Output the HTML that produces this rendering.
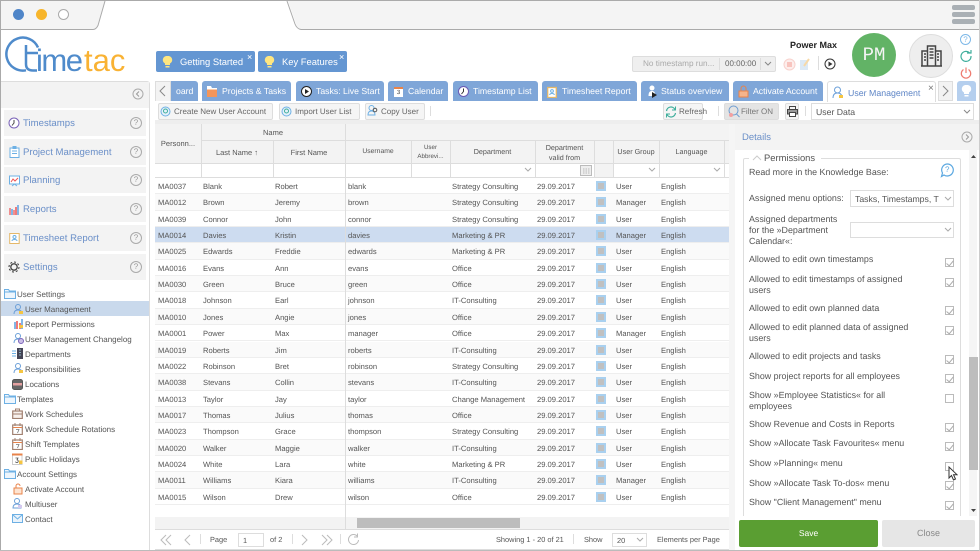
<!DOCTYPE html>
<html><head><meta charset="utf-8"><style>
*{box-sizing:border-box}
html,body{margin:0;padding:0;background:#fff}
body{width:980px;height:551px;overflow:hidden;background:#fff;position:relative;font-family:"Liberation Sans",sans-serif;color:#555;font-size:9px;text-rendering:geometricPrecision;filter:blur(.3px)}
div,span,svg{position:absolute;white-space:nowrap}
.tab{top:81px;height:20px;background:#7fa6d8;border-radius:3px 3px 0 0;color:#fff;font-size:8.7px;line-height:21px}
.tab b{font-weight:normal;position:absolute;top:0}
.btn{top:103px;height:17px;background:#f5f5f5;border:1px solid #ddd;border-radius:2px;font-size:8px;line-height:16px;color:#666}
.btn b{font-weight:normal;position:absolute;top:0}
.nav{left:4px;width:142px;height:26px;background:#f3f3f3;color:#6a8fc8;font-size:9.6px;line-height:26px}
.nav b{font-weight:normal;position:absolute;left:19px;top:1px}
.q{left:126px;top:7px;width:12px;height:12px;border:1px solid #aaa;border-radius:50%;color:#999;font-size:8px;line-height:10px;text-align:center}
.t{font-size:8px;color:#555;line-height:15px;height:15px}
.row{left:155px;width:574px;height:16.35px;border-bottom:1px solid #eee;font-size:7.6px;line-height:17px;color:#555}
.row.g{background:#fafafa}
.row.s{background:#cddcf0}
.row span{top:0}
.c1{left:3px}.c2{left:48px}.c3{left:120px}.c4{left:193px}.c5{left:297px}.c6{left:382px}.c7{left:441px;top:3px!important;width:10px;height:10px;background:#c0c0c0;border:2px solid #a9d0ef}.c8{left:461px}.c9{left:506px}
.h{font-size:7.2px;color:#555;text-align:center;line-height:9px;white-space:normal}
.v{width:1px;background:#ddd}
.l{left:749px;font-size:8.9px;color:#555;line-height:11px}
.cb{left:945px;width:9px;height:9px;border:1px solid #bbb;background:#fff}
.cb.k:after{content:"";position:absolute;left:2px;top:0;width:3px;height:6px;border:solid #aaa;border-width:0 1px 1px 0;transform:rotate(40deg)}
.p{top:534px;font-size:7.4px;color:#555;line-height:11px}
</style></head><body>
<div style="left:0;top:0;width:980px;height:30px;background:#f4f4f4;border-top:1px solid #aaa;border-bottom:1px solid #aaa"></div>
<svg style="left:90px;top:0" width="225" height="31"><path d="M0 29.5h3q3 0 5-4L15 1H198L206 24q2 5 6 5.5H225V31H0z" fill="#fff"/><path d="M0 29.5h3q3 0 5-4L15 1M197 1L205 24q2 5 6 5.5h14" fill="none" stroke="#aaa"/></svg>
<div style="left:13px;top:9px;width:11px;height:11px;border-radius:50%;background:#4f85c8"></div>
<div style="left:36px;top:9px;width:11px;height:11px;border-radius:50%;background:#f7b52b"></div>
<div style="left:58px;top:9px;width:11px;height:11px;border-radius:50%;background:#fff;border:1px solid #aaa"></div>
<div style="left:952px;top:5px;width:23px;height:5px;background:#aab0b5;border-radius:2px"></div>
<div style="left:952px;top:12px;width:23px;height:5px;background:#aab0b5;border-radius:2px"></div>
<div style="left:952px;top:19px;width:23px;height:5px;background:#aab0b5;border-radius:2px"></div>
<div style="left:0;top:0;width:1px;height:551px;background:#aaa"></div>
<!-- logo -->
<svg style="left:5px;top:34px" width="50" height="40"><path d="M33 13.500A16.500 16.500 0 1 0 21 36.300" fill="none" stroke="#4f8bcb" stroke-width="2.500"/><path d="M21 11V30q0 6.500 7 6.500h4M21 19H33" fill="none" stroke="#4f8bcb" stroke-width="2.500"/></svg>
<div style="left:36px;top:45px;font-size:31px;line-height:31px;color:#4f8bcb;letter-spacing:-1.5px">ime</div>
<div style="left:84px;top:45px;font-size:31px;line-height:31px;color:#f9b233">tac</div>
<!-- top tip buttons -->
<div style="left:156px;top:51px;width:99px;height:21px;background:#6496d2;border-radius:2px;color:#fff;font-size:9.4px;line-height:22px"><span style="left:24px">Getting Started</span><span style="left:91px;top:-5px;font-size:9px">×</span></div>
<svg style="left:162px;top:56px" width="11" height="12"><path d="M5.500 0a4 4 0 0 1 2.500 7.500V9H3V7.500A4 4 0 0 1 5.500 0z" fill="#ffe680"/><path d="M3.500 10h4v1.500h-4z" fill="#ffe680"/></svg>
<div style="left:258px;top:51px;width:89px;height:21px;background:#6496d2;border-radius:2px;color:#fff;font-size:9.4px;line-height:22px"><span style="left:24px">Key Features</span><span style="left:81px;top:-5px;font-size:9px">×</span></div>
<svg style="left:264px;top:56px" width="11" height="12"><path d="M5.500 0a4 4 0 0 1 2.500 7.500V9H3V7.500A4 4 0 0 1 5.500 0z" fill="#ffe680"/><path d="M3.500 10h4v1.500h-4z" fill="#ffe680"/></svg>
<!-- timer -->
<div style="left:632px;top:56px;width:144px;height:16px;background:#efefef;border:1px solid #ddd;border-radius:2px"></div>
<div style="left:643px;top:58px;font-size:8.2px;line-height:12px;color:#aaa">No timestamp run...</div>
<div style="left:725px;top:58px;font-size:8px;line-height:12px;color:#666">00:00:00</div>
<div class="v" style="left:719px;top:58px;height:12px"></div><div class="v" style="left:760px;top:58px;height:12px"></div>
<svg style="left:764px;top:61px" width="8" height="6"><path d="M1 1l3 3 3-3" fill="none" stroke="#888"/></svg>
<svg style="left:783px;top:58px" width="13" height="13"><circle cx="6.500" cy="6.500" r="5.500" fill="#fdeeec" stroke="#f8d2cd"/><rect x="4" y="4" width="5" height="5" fill="#f8c4be"/></svg>
<svg style="left:799px;top:58px" width="12" height="13"><rect x="1" y="2" width="8" height="10" fill="#dce9f5"/><path d="M5 8L10 1" stroke="#f7d9a8" stroke-width="2"/></svg>
<div class="v" style="left:818px;top:56px;height:14px"></div>
<svg style="left:824px;top:58px" width="12" height="12"><circle cx="6" cy="6" r="5" fill="#fff" stroke="#333"/><path d="M4.500 3.500L8.500 6 4.500 8.500z" fill="#333"/></svg>
<div style="left:790px;top:40px;font-size:9px;font-weight:bold;color:#222;line-height:11px">Power Max</div>
<div style="left:852px;top:33px;width:44px;height:44px;border-radius:50%;background:#62b366;color:#f4f4f4;font-family:'Liberation Mono',monospace;font-size:19px;line-height:44px;text-align:center">PM</div>
<div style="left:909px;top:34px;width:44px;height:44px;border-radius:50%;background:#eee;border:1px solid #ddd"></div>
<svg style="left:921px;top:44px" width="21" height="23"><path d="M6.500 22V2h8v20M1 22V7h5.500M14.500 7H20v15M0 22h21" fill="none" stroke="#444" stroke-width="1.500"/><path d="M8.500 5h4M8.500 8h4M8.500 11h4M8.500 14h4M3 10h2M3 13h2M3 16h2M16 10h2M16 13h2M16 16h2" stroke="#444" stroke-width="1.500"/></svg>
<div style="left:960px;top:34px;width:11px;height:11px;border:1px solid #7db8e8;border-radius:50%;color:#7db8e8;font-size:8px;line-height:10px;text-align:center">?</div>
<svg style="left:960px;top:50px" width="12" height="12"><path d="M9.500 2.800A5 5 0 1 0 11 6" fill="none" stroke="#3fae9c" stroke-width="1.200"/><path d="M7 3h4V0" fill="none" stroke="#3fae9c" stroke-width="1.200"/></svg>
<svg style="left:960px;top:67px" width="12" height="12"><path d="M3.500 2.500a4.700 4.700 0 1 0 5 0M6 .5V6" fill="none" stroke="#ee7b70" stroke-width="1.200"/></svg>
<!-- tabs -->
<div style="left:155px;top:81px;width:16px;height:20px;background:#f3f3f3;border:1px solid #ddd;border-bottom:0"></div>
<svg style="left:159px;top:85px" width="8" height="12"><path d="M6 1L1 6l5 5" fill="none" stroke="#888"/></svg>
<div class="tab" style="left:171px;width:27px;border-radius:0 3px 0 0"><b style="left:5px">oard</b></div>
<div class="tab" style="left:202px;width:89px"><b style="left:20px">Projects &amp; Tasks</b></div>
<svg style="left:207px;top:86px" width="10" height="11"><path d="M0 0h4l1 2h5v9H0z" fill="#fff"/><rect x="0" y="3.500" width="10" height="7.500" fill="#f3955a"/></svg>
<div class="tab" style="left:296px;width:88px"><b style="left:20px">Tasks: Live Start</b></div>
<svg style="left:301px;top:86px" width="11" height="11"><circle cx="5.500" cy="5.500" r="5" fill="#fff" stroke="#222"/><path d="M4 3l4 2.500L4 8z" fill="#222"/></svg>
<div class="tab" style="left:388px;width:60px"><b style="left:20px">Calendar</b></div>
<div style="left:394px;top:87px;width:9px;height:10px;background:#fff;border-top:2px solid #e8834a;color:#444;font-size:6px;line-height:8px;text-align:center">3</div>
<div class="tab" style="left:453px;width:85px"><b style="left:20px">Timestamp List</b></div>
<svg style="left:458px;top:86px" width="11" height="11"><circle cx="5.500" cy="5.500" r="5" fill="#fff" stroke="#6b5bb5"/><path d="M5.500 2.500v3L3.500 8" fill="none" stroke="#333"/></svg>
<div class="tab" style="left:542px;width:95px"><b style="left:20px">Timesheet Report</b></div>
<svg style="left:547px;top:86px" width="10" height="12"><rect x=".7" y="1.500" width="8.600" height="10" fill="#fff" stroke="#e4b86a" stroke-width="1.300"/><circle cx="5" cy="5" r="1.400" fill="none" stroke="#6db0e4"/><path d="M2.700 9c0-2 4.600-2 4.600 0" fill="none" stroke="#6db0e4"/></svg>
<div class="tab" style="left:641px;width:88px"><b style="left:20px">Status overview</b></div>
<svg style="left:647px;top:85px" width="11" height="13"><circle cx="5" cy="3" r="2.500" fill="#fff"/><path d="M1.500 11c0-4 1.500-5 3.500-5s3 1 3 3v2z" fill="#fff"/><path d="M5 7v6l5-3z" fill="#222"/></svg>
<div class="tab" style="left:733px;width:90px"><b style="left:20px">Activate Account</b></div>
<svg style="left:738px;top:85px" width="11" height="13"><path d="M3 6V3.500a2.500 2.500 0 0 1 5 0V6" fill="none" stroke="#e8834a"/><rect x="1" y="6" width="9" height="6" fill="#f4b48c" stroke="#e8834a"/></svg>
<div style="left:827px;top:81px;width:109px;height:21px;background:#fff;border:1px solid #ddd;border-bottom:0;border-radius:3px 3px 0 0;color:#5f86c6;font-size:8.8px;line-height:23px"><span style="left:20px">User Management</span><span style="left:100px;top:-5px;color:#777;font-size:10px">×</span></div>
<svg style="left:832px;top:86px" width="12" height="13"><circle cx="5.500" cy="4" r="3" fill="none" stroke="#6b9fd8"/><path d="M1 12c0-4 2-5 4.500-5S10 8 10 12" fill="none" stroke="#6b9fd8"/><rect x="7" y="9" width="4" height="3" fill="#f5c542"/></svg>
<div style="left:938px;top:81px;width:15px;height:20px;background:#f3f3f3;border:1px solid #ddd"></div>
<svg style="left:941px;top:85px" width="8" height="12"><path d="M2 1l5 5-5 5" fill="none" stroke="#888"/></svg>
<div style="left:957px;top:81px;width:19px;height:20px;background:#b5cfee;border-radius:3px 3px 0 0"></div>
<svg style="left:961px;top:85px" width="11" height="13"><path d="M5.500 0a4 4 0 0 1 2.500 7.500V9H3V7.500A4 4 0 0 1 5.500 0z" fill="#fff"/><path d="M3.500 10h4v1.500h-4z" fill="#fff"/></svg>
<!-- sidebar -->
<div style="left:1px;top:81px;width:149px;height:470px;border:1px solid #ddd;border-left:0;border-radius:0 3px 0 0"></div>
<div style="left:1px;top:82px;width:148px;height:26px;background:#f3f3f3"></div>
<svg style="left:132px;top:88px" width="12" height="12"><circle cx="6" cy="6" r="5" fill="none" stroke="#aaa"/><path d="M7 3.500L4.500 6 7 8.500" fill="none" stroke="#999"/></svg>
<div class="nav" style="top:110px"><b>Timestamps</b><span class="q">?</span></div>
<div class="nav" style="top:139px"><b>Project Management</b><span class="q">?</span></div>
<div class="nav" style="top:167px"><b>Planning</b><span class="q">?</span></div>
<div class="nav" style="top:196px"><b>Reports</b><span class="q">?</span></div>
<div class="nav" style="top:225px"><b>Timesheet Report</b><span class="q">?</span></div>
<div class="nav" style="top:254px"><b>Settings</b><span class="q">?</span></div>
<svg style="left:8px;top:117px" width="12" height="12"><circle cx="6" cy="6" r="5" fill="#fff" stroke="#7a63b8"/><path d="M6 3v3L4 8.500" fill="none" stroke="#444"/></svg>
<svg style="left:9px;top:146px" width="11" height="12"><rect x="1" y="2" width="9" height="9.500" fill="#fff" stroke="#6db0e4"/><path d="M3 5h5M3 7.500h5" stroke="#6db0e4"/><rect x="3.500" y="0" width="4" height="3" fill="#6db0e4"/></svg>
<svg style="left:9px;top:175px" width="11" height="12"><rect x=".5" y="1" width="10" height="8" fill="#fff" stroke="#6db0e4"/><path d="M2 7l2-3 2 2 3-3" fill="none" stroke="#e55"/><path d="M3 11l2.500-2 2.500 2" fill="none" stroke="#6db0e4"/></svg>
<svg style="left:8px;top:204px" width="12" height="11"><path d="M1 4h2v7H1zM5 6h2v5H5z" fill="#f08f8f"/><path d="M3 5h2v6H3zM9 1h2v10H9z" fill="#82b6e6"/><path d="M7 3h2v8H7z" fill="#ee7b7b"/></svg>
<svg style="left:9px;top:232px" width="11" height="12"><rect x=".7" y="1.500" width="9.500" height="10" fill="#fff" stroke="#e4b86a"/><circle cx="5.500" cy="5" r="1.500" fill="none" stroke="#6db0e4"/><path d="M3 9c0-2 5-2 5 0" fill="none" stroke="#6db0e4"/></svg>
<svg style="left:8px;top:261px" width="12" height="12"><circle cx="6" cy="6" r="3.200" fill="none" stroke="#444" stroke-width="1.300"/><circle cx="6" cy="6" r="5" fill="none" stroke="#444" stroke-width="1.100" stroke-dasharray="2 1.900"/></svg>
<div style="left:1px;top:301px;width:148px;height:15px;background:#c9d9ec"></div>
<div class="t" style="left:17px;top:287px">User Settings</div>
<div class="t" style="left:25px;top:302px">User Management</div>
<div class="t" style="left:25px;top:317px">Report Permissions</div>
<div class="t" style="left:25px;top:332px">User Management Changelog</div>
<div class="t" style="left:25px;top:347px">Departments</div>
<div class="t" style="left:25px;top:362px">Responsibilities</div>
<div class="t" style="left:25px;top:377px">Locations</div>
<div class="t" style="left:17px;top:392px">Templates</div>
<div class="t" style="left:25px;top:407px">Work Schedules</div>
<div class="t" style="left:25px;top:422px">Work Schedule Rotations</div>
<div class="t" style="left:25px;top:437px">Shift Templates</div>
<div class="t" style="left:25px;top:452px">Public Holidays</div>
<div class="t" style="left:17px;top:467px">Account Settings</div>
<div class="t" style="left:25px;top:482px">Activate Account</div>
<div class="t" style="left:25px;top:497px">Multiuser</div>
<div class="t" style="left:25px;top:512px">Contact</div>
<svg style="left:4px;top:288px" width="12" height="11"><path d="M.5 3V1.500h4l1 1.500h6v7.500H.5z" fill="#eef6fd" stroke="#6db0e4"/><path d="M.5 4h11" stroke="#6db0e4"/></svg>
<svg style="left:4px;top:393px" width="12" height="11"><path d="M.5 3V1.500h4l1 1.500h6v7.500H.5z" fill="#eef6fd" stroke="#6db0e4"/><path d="M.5 4h11" stroke="#6db0e4"/></svg>
<svg style="left:4px;top:468px" width="12" height="11"><path d="M.5 3V1.500h4l1 1.500h6v7.500H.5z" fill="#eef6fd" stroke="#6db0e4"/><path d="M.5 4h11" stroke="#6db0e4"/></svg>
<svg style="left:13px;top:304px" width="11" height="11"><circle cx="5" cy="3" r="2.500" fill="none" stroke="#6b9fd8"/><path d="M1 10c0-3 2-4 4-4s4 1 4 4" fill="none" stroke="#6b9fd8"/><rect x="6" y="7" width="4" height="3" fill="#f5c542"/></svg>
<svg style="left:13px;top:318px" width="11" height="11"><path d="M1 4h2v7H1zM8 1h2v10H8z" fill="#82b6e6"/><path d="M3 3h2v8H3zM6 5h2v6H6z" fill="#ee7b7b"/><rect x="6" y="7" width="4" height="3" fill="#f5c542"/></svg>
<svg style="left:13px;top:333px" width="11" height="11"><circle cx="5" cy="3" r="2.500" fill="none" stroke="#6b9fd8"/><path d="M1 10c0-3 2-4 4-4s4 1 4 4" fill="none" stroke="#6b9fd8"/><circle cx="8" cy="8" r="2.500" fill="#cbbfe8" stroke="#7a63b8"/></svg>
<svg style="left:12px;top:348px" width="12" height="11"><path d="M0 3h4M0 5.500h4M0 8h4" stroke="#6db0e4"/><rect x="5" y="0" width="6" height="11" fill="#445"/><path d="M7 2h2M7 4.500h2M7 7h2" stroke="#8ab"/></svg>
<svg style="left:13px;top:363px" width="11" height="11"><circle cx="5" cy="3" r="2.500" fill="none" stroke="#6b9fd8"/><path d="M1 10c0-3 2-4 4-4s4 1 4 4" fill="none" stroke="#6b9fd8"/><rect x="6" y="7" width="4" height="3" fill="#f5c542"/></svg>
<svg style="left:12px;top:379px" width="11" height="11"><rect x=".5" y=".5" width="10" height="10" rx="2" fill="#666" stroke="#555"/><rect x="1" y="4" width="9" height="2.500" fill="#e4a0a0"/></svg>
<svg style="left:12px;top:408px" width="11" height="11"><rect x=".7" y="3" width="9.600" height="7.500" fill="#f7f0ec" stroke="#a08070" stroke-width="1.200"/><path d="M3.500 3V1h4v2M1 6h9" fill="none" stroke="#a08070"/></svg>
<svg style="left:12px;top:423px" width="11" height="12"><rect x=".7" y="2" width="9.600" height="9.500" fill="#fff" stroke="#a08070" stroke-width="1.200"/><path d="M1 4.500h9" stroke="#e8834a"/><path d="M3 0v3M8 0v3" stroke="#a08070"/><path d="M4 6.500h3L5.500 10" fill="none" stroke="#777" stroke-width=".8"/></svg>
<svg style="left:12px;top:438px" width="11" height="12"><rect x=".7" y="2" width="9.600" height="9.500" fill="#fff" stroke="#a08070" stroke-width="1.200"/><path d="M1 4.500h9" stroke="#e8834a"/><path d="M3 0v3M8 0v3" stroke="#a08070"/><path d="M4 6.500h3L5.500 10" fill="none" stroke="#777" stroke-width=".8"/></svg>
<svg style="left:12px;top:453px" width="11" height="12"><rect x=".5" y="1" width="9.500" height="10.500" fill="#fff" stroke="#ccc"/><path d="M0 1.500h10.500" stroke="#e8834a" stroke-width="2"/><path d="M3.500 5h2.500l-1 1.800a1.400 1.400 0 1 1-1.500 1.800" fill="none" stroke="#555" stroke-width=".8"/><rect x="7" y="7.500" width="3.500" height="3.500" fill="#f5c542"/></svg>
<svg style="left:13px;top:483px" width="10" height="12"><path d="M3 5V3a2 2 0 0 1 4 0" fill="none" stroke="#e8834a"/><rect x="1" y="5" width="8" height="6" fill="#fde4d2" stroke="#e8834a"/></svg>
<svg style="left:12px;top:498px" width="11" height="12"><circle cx="5" cy="3" r="2.500" fill="none" stroke="#6b9fd8"/><path d="M1 10c0-3 2-4 4-4s4 1 4 4z" fill="none" stroke="#6b9fd8"/><rect x="6" y="7" width="4" height="3" fill="#d5c8ee"/></svg>
<svg style="left:12px;top:514px" width="11" height="9"><rect x=".5" y=".5" width="10" height="8" fill="#eaf3fb" stroke="#6db0e4"/><path d="M1 1l4.500 4L10 1" fill="none" stroke="#6db0e4"/></svg>
<!-- toolbar -->
<div class="btn" style="left:158px;width:115px"><b style="left:15px">Create New User Account</b></div>
<div class="btn" style="left:279px;width:81px"><b style="left:15px">Import User List</b></div>
<div class="btn" style="left:365px;width:60px"><b style="left:15px">Copy User</b></div>
<svg style="left:160px;top:106px" width="11" height="11"><circle cx="5.500" cy="5.500" r="4.500" fill="#e6f1fb" stroke="#6db0e4"/><circle cx="5.500" cy="5" r="2" fill="none" stroke="#3fae9c"/></svg>
<svg style="left:281px;top:106px" width="11" height="11"><circle cx="5.500" cy="5.500" r="4.500" fill="#e6f1fb" stroke="#6db0e4"/><circle cx="5.500" cy="5" r="2" fill="none" stroke="#3fae9c"/></svg>
<svg style="left:367px;top:105px" width="11" height="12"><circle cx="4.500" cy="3" r="2.500" fill="none" stroke="#6db0e4"/><path d="M1 10c0-3 1.500-4 3.500-4s3.500 1 3.500 4z" fill="none" stroke="#6db0e4"/><circle cx="8" cy="5" r="1.800" fill="none" stroke="#555"/></svg>
<div class="v" style="left:430px;top:106px;height:10px"></div>
<div class="btn" style="left:663px;width:40px"><b style="left:15px">Refresh</b></div>
<svg style="left:665px;top:106px" width="12" height="12"><path d="M1.500 5A4.500 4.500 0 0 1 10 3.500M10.500 7A4.500 4.500 0 0 1 2 8.500" fill="none" stroke="#3fae9c" stroke-width="1.200"/><path d="M10.500 .5V4H7M1.500 11.500V8H5" fill="none" stroke="#3fae9c"/></svg>
<div class="v" style="left:718px;top:106px;height:10px"></div>
<div class="btn" style="left:724px;width:55px;background:#e4e4e4;color:#777"><b style="left:16px">Filter ON</b></div>
<svg style="left:727px;top:105px" width="13" height="13"><circle cx="6.500" cy="5.500" r="4.500" fill="none" stroke="#6d9cd0"/><path d="M9.500 9l3 3" stroke="#6d9cd0"/><circle cx="4" cy="10" r="2" fill="#f3a0a0"/></svg>
<div class="btn" style="left:785px;width:14px"></div>
<svg style="left:787px;top:106px" width="11" height="11"><rect x="2.500" y=".5" width="6" height="3" fill="none" stroke="#444"/><rect x=".5" y="3.500" width="10" height="4.500" fill="#999" stroke="#444"/><rect x="2.500" y="6.500" width="6" height="4" fill="#fff" stroke="#444"/></svg>
<div class="v" style="left:805px;top:106px;height:10px"></div>
<div style="left:811px;top:103px;width:163px;height:17px;border:1px solid #ddd;background:#fff;font-size:8.7px;line-height:16px;color:#555"><span style="left:4px">User Data</span></div>
<svg style="left:963px;top:109px" width="8" height="6"><path d="M1 1l3 3 3-3" fill="none" stroke="#888"/></svg>
<!-- grid -->
<div style="left:155px;top:120px;width:825px;height:4px;background:#eee"></div>
<div style="left:155px;top:124px;width:574px;height:39px;background:#f3f3f3"></div>
<div style="left:201px;top:140px;width:144px;height:1px;background:#ddd"></div>
<div style="left:345px;top:140px;width:384px;height:1px;background:#ddd"></div>
<div style="left:155px;top:163px;width:574px;height:1px;background:#ddd"></div>
<div style="left:155px;top:177px;width:574px;height:1px;background:#ddd"></div>
<div style="left:594px;top:164px;width:19px;height:13px;background:#f3f3f3"></div>
<div class="v" style="left:201px;top:124px;height:54px"></div>
<div class="v" style="left:273px;top:141px;height:37px"></div>
<div class="v" style="left:345px;top:124px;height:393px"></div>
<div class="v" style="left:411px;top:141px;height:37px"></div>
<div class="v" style="left:450px;top:141px;height:37px"></div>
<div class="v" style="left:535px;top:141px;height:37px"></div>
<div class="v" style="left:594px;top:141px;height:37px"></div>
<div class="v" style="left:613px;top:141px;height:37px"></div>
<div class="v" style="left:659px;top:141px;height:37px"></div>
<div class="v" style="left:724px;top:141px;height:37px"></div>
<div class="h" style="left:155px;top:139px;width:46px;font-size:7.5px">Personn...</div>
<div class="h" style="left:201px;top:128px;width:144px;font-size:7.5px">Name</div>
<div class="h" style="left:201px;top:148px;width:72px;font-size:7.5px">Last Name ↑</div>
<div class="h" style="left:273px;top:148px;width:72px;font-size:7.5px">First Name</div>
<div class="h" style="left:345px;top:147px;width:66px;font-size:6.8px">Username</div>
<div class="h" style="left:411px;top:143px;width:39px;font-size:6.2px;line-height:9px">User<br>Abbrevi...</div>
<div class="h" style="left:450px;top:147px;width:85px">Department</div>
<div class="h" style="left:535px;top:143px;width:59px;line-height:10px">Department<br>valid from</div>
<div class="h" style="left:613px;top:147px;width:46px">User Group</div>
<div class="h" style="left:659px;top:147px;width:65px">Language</div>
<svg style="left:524px;top:167px" width="8" height="6"><path d="M1 1l3 3 3-3" fill="none" stroke="#aaa"/></svg>
<svg style="left:648px;top:167px" width="8" height="6"><path d="M1 1l3 3 3-3" fill="none" stroke="#aaa"/></svg>
<svg style="left:713px;top:167px" width="8" height="6"><path d="M1 1l3 3 3-3" fill="none" stroke="#aaa"/></svg>
<svg style="left:580px;top:164px" width="13" height="12"><rect x=".5" y="1.500" width="11" height="10" fill="#eee" stroke="#bbb"/><path d="M3 5h7M3 7h7M3 9h7" stroke="#bbb" stroke-dasharray="1.500 1"/></svg>

<div class="row" style="top:178px"><span class="c1">MA0037</span><span class="c2">Blank</span><span class="c3">Robert</span><span class="c4">blank</span><span class="c5">Strategy Consulting</span><span class="c6">29.09.2017</span><span class="c7"></span><span class="c8">User</span><span class="c9">English</span></div>
<div class="row g" style="top:194.35px"><span class="c1">MA0012</span><span class="c2">Brown</span><span class="c3">Jeremy</span><span class="c4">brown</span><span class="c5">Strategy Consulting</span><span class="c6">29.09.2017</span><span class="c7"></span><span class="c8">Manager</span><span class="c9">English</span></div>
<div class="row" style="top:210.7px"><span class="c1">MA0039</span><span class="c2">Connor</span><span class="c3">John</span><span class="c4">connor</span><span class="c5">Strategy Consulting</span><span class="c6">29.09.2017</span><span class="c7"></span><span class="c8">User</span><span class="c9">English</span></div>
<div class="row s" style="top:227.05px"><span class="c1">MA0014</span><span class="c2">Davies</span><span class="c3">Kristin</span><span class="c4">davies</span><span class="c5">Marketing &amp; PR</span><span class="c6">29.09.2017</span><span class="c7"></span><span class="c8">Manager</span><span class="c9">English</span></div>
<div class="row g" style="top:243.4px"><span class="c1">MA0025</span><span class="c2">Edwards</span><span class="c3">Freddie</span><span class="c4">edwards</span><span class="c5">Marketing &amp; PR</span><span class="c6">29.09.2017</span><span class="c7"></span><span class="c8">User</span><span class="c9">English</span></div>
<div class="row" style="top:259.75px"><span class="c1">MA0016</span><span class="c2">Evans</span><span class="c3">Ann</span><span class="c4">evans</span><span class="c5">Office</span><span class="c6">29.09.2017</span><span class="c7"></span><span class="c8">User</span><span class="c9">English</span></div>
<div class="row g" style="top:276.1px"><span class="c1">MA0030</span><span class="c2">Green</span><span class="c3">Bruce</span><span class="c4">green</span><span class="c5">Office</span><span class="c6">29.09.2017</span><span class="c7"></span><span class="c8">User</span><span class="c9">English</span></div>
<div class="row" style="top:292.45px"><span class="c1">MA0018</span><span class="c2">Johnson</span><span class="c3">Earl</span><span class="c4">johnson</span><span class="c5">IT-Consulting</span><span class="c6">29.09.2017</span><span class="c7"></span><span class="c8">User</span><span class="c9">English</span></div>
<div class="row g" style="top:308.8px"><span class="c1">MA0010</span><span class="c2">Jones</span><span class="c3">Angie</span><span class="c4">jones</span><span class="c5">Office</span><span class="c6">29.09.2017</span><span class="c7"></span><span class="c8">User</span><span class="c9">English</span></div>
<div class="row" style="top:325.15px"><span class="c1">MA0001</span><span class="c2">Power</span><span class="c3">Max</span><span class="c4">manager</span><span class="c5">Office</span><span class="c6">29.09.2017</span><span class="c7"></span><span class="c8">Manager</span><span class="c9">English</span></div>
<div class="row g" style="top:341.5px"><span class="c1">MA0019</span><span class="c2">Roberts</span><span class="c3">Jim</span><span class="c4">roberts</span><span class="c5">IT-Consulting</span><span class="c6">29.09.2017</span><span class="c7"></span><span class="c8">User</span><span class="c9">English</span></div>
<div class="row" style="top:357.85px"><span class="c1">MA0022</span><span class="c2">Robinson</span><span class="c3">Bret</span><span class="c4">robinson</span><span class="c5">Strategy Consulting</span><span class="c6">29.09.2017</span><span class="c7"></span><span class="c8">User</span><span class="c9">English</span></div>
<div class="row g" style="top:374.2px"><span class="c1">MA0038</span><span class="c2">Stevans</span><span class="c3">Collin</span><span class="c4">stevans</span><span class="c5">IT-Consulting</span><span class="c6">29.09.2017</span><span class="c7"></span><span class="c8">User</span><span class="c9">English</span></div>
<div class="row" style="top:390.55px"><span class="c1">MA0013</span><span class="c2">Taylor</span><span class="c3">Jay</span><span class="c4">taylor</span><span class="c5">Change Management</span><span class="c6">29.09.2017</span><span class="c7"></span><span class="c8">User</span><span class="c9">English</span></div>
<div class="row g" style="top:406.9px"><span class="c1">MA0017</span><span class="c2">Thomas</span><span class="c3">Julius</span><span class="c4">thomas</span><span class="c5">Office</span><span class="c6">29.09.2017</span><span class="c7"></span><span class="c8">User</span><span class="c9">English</span></div>
<div class="row" style="top:423.25px"><span class="c1">MA0023</span><span class="c2">Thompson</span><span class="c3">Grace</span><span class="c4">thompson</span><span class="c5">Strategy Consulting</span><span class="c6">29.09.2017</span><span class="c7"></span><span class="c8">User</span><span class="c9">English</span></div>
<div class="row g" style="top:439.6px"><span class="c1">MA0020</span><span class="c2">Walker</span><span class="c3">Maggie</span><span class="c4">walker</span><span class="c5">IT-Consulting</span><span class="c6">29.09.2017</span><span class="c7"></span><span class="c8">User</span><span class="c9">English</span></div>
<div class="row" style="top:455.95px"><span class="c1">MA0024</span><span class="c2">White</span><span class="c3">Lara</span><span class="c4">white</span><span class="c5">Marketing &amp; PR</span><span class="c6">29.09.2017</span><span class="c7"></span><span class="c8">User</span><span class="c9">English</span></div>
<div class="row g" style="top:472.3px"><span class="c1">MA0011</span><span class="c2">Williams</span><span class="c3">Kiara</span><span class="c4">williams</span><span class="c5">IT-Consulting</span><span class="c6">29.09.2017</span><span class="c7"></span><span class="c8">Manager</span><span class="c9">English</span></div>
<div class="row" style="top:488.65px"><span class="c1">MA0015</span><span class="c2">Wilson</span><span class="c3">Drew</span><span class="c4">wilson</span><span class="c5">Office</span><span class="c6">29.09.2017</span><span class="c7"></span><span class="c8">User</span><span class="c9">English</span></div>
<div class="v" style="left:345px;top:178px;height:339px"></div>
<!-- h scroll -->
<div style="left:155px;top:517px;width:574px;height:12px;background:#f3f3f3"></div>
<div style="left:357px;top:518px;width:163px;height:10px;background:#bdbdbd"></div>
<div class="v" style="left:345px;top:517px;height:12px"></div>
<!-- pager -->
<div style="left:155px;top:529px;width:574px;height:21px;border-top:1px solid #ddd;border-bottom:1px solid #ddd"></div>
<svg style="left:160px;top:534px" width="40" height="12"><path d="M6 1L1 6l5 5M11 1L6 6l5 5M30 1l-5 5 5 5" fill="none" stroke="#bbb"/></svg>
<div class="v" style="left:200px;top:534px;height:10px"></div>
<div class="p" style="left:210px">Page</div>
<div style="left:238px;top:533px;width:26px;height:14px;border:1px solid #ddd;font-size:7.4px;line-height:13px"><span style="left:4px">1</span></div>
<div class="p" style="left:270px">of 2</div>
<div class="v" style="left:292px;top:534px;height:10px"></div>
<svg style="left:300px;top:534px" width="42" height="12"><path d="M2 1l5 5-5 5M22 1l5 5-5 5M27 1l5 5-5 5" fill="none" stroke="#bbb"/></svg>
<div class="v" style="left:340px;top:534px;height:10px"></div>
<svg style="left:347px;top:533px" width="13" height="13"><path d="M10.500 3.500A5 5 0 1 0 11.500 7" fill="none" stroke="#bbb"/><path d="M10.500 .5V4H7" fill="none" stroke="#bbb"/></svg>
<div class="p" style="left:496px">Showing 1 - 20 of 21</div>
<div class="v" style="left:573px;top:534px;height:10px"></div>
<div class="p" style="left:584px">Show</div>
<div style="left:612px;top:533px;width:35px;height:14px;border:1px solid #ddd;font-size:7.4px;line-height:13px"><span style="left:4px">20</span></div>
<svg style="left:636px;top:537px" width="8" height="6"><path d="M1 1l3 3 3-3" fill="none" stroke="#aaa"/></svg>
<div class="p" style="left:657px">Elements per Page</div>
<!-- details -->
<div style="left:729px;top:124px;width:6px;height:427px;background:#f5f5f5"></div>
<div style="left:735px;top:124px;width:245px;height:26px;background:#f3f3f3"></div>
<div style="left:742px;top:131px;font-size:9.5px;line-height:13px;color:#6a8fc8">Details</div>
<svg style="left:961px;top:131px" width="12" height="12"><circle cx="6" cy="6" r="5" fill="none" stroke="#aaa"/><path d="M5 3.500L7.500 6 5 8.500" fill="none" stroke="#999"/></svg>
<div style="left:743px;top:158px;width:218px;height:358px;border:1px solid #ddd;border-bottom:0;border-radius:2px 2px 0 0"></div>
<div style="left:749px;top:152px;width:72px;height:12px;background:#fff"></div>
<svg style="left:752px;top:155px" width="10" height="6"><path d="M1 5l4-4 4 4" fill="none" stroke="#ccc"/></svg>
<div class="l" style="left:764px;top:152px;font-size:9.4px">Permissions</div>
<div class="l" style="top:167px">Read more in the Knowledge Base:</div>
<svg style="left:940px;top:163px" width="15" height="15"><path d="M7 1a6 6 0 1 1-3 11L1.500 13.500 2.500 10A6 6 0 0 1 7 1z" fill="none" stroke="#5aa7e0" stroke-width="1.200"/></svg>
<div style="left:945px;top:165px;font-size:8px;color:#5aa7e0;line-height:10px">?</div>
<div class="l" style="top:193px">Assigned menu options:</div>
<div style="left:850px;top:190px;width:104px;height:17px;border:1px solid #ddd;font-size:8.7px;line-height:16px;overflow:hidden"><span style="left:4px">Tasks, Timestamps, T</span></div>
<div style="left:941px;top:191px;width:12px;height:15px;background:#fff"></div>
<svg style="left:944px;top:196px" width="8" height="6"><path d="M1 1l3 3 3-3" fill="none" stroke="#aaa"/></svg>
<div class="l" style="top:214px">Assigned departments<br>for the »Department<br>Calendar«:</div>
<div style="left:850px;top:222px;width:104px;height:16px;border:1px solid #ddd"></div>
<svg style="left:944px;top:227px" width="8" height="6"><path d="M1 1l3 3 3-3" fill="none" stroke="#aaa"/></svg>
<div class="l" style="top:254px">Allowed to edit own timestamps</div>
<div class="l" style="top:274px">Allowed to edit timestamps of assigned<br>users</div>
<div class="l" style="top:303px">Allowed to edit own planned data</div>
<div class="l" style="top:322px">Allowed to edit planned data of assigned<br>users</div>
<div class="l" style="top:351px">Allowed to edit projects and tasks</div>
<div class="l" style="top:371px">Show project reports for all employees</div>
<div class="l" style="top:390px">Show »Employee Statistics« for all<br>employees</div>
<div class="l" style="top:419px">Show Revenue and Costs in Reports</div>
<div class="l" style="top:438px">Show »Allocate Task Favourites« menu</div>
<div class="l" style="top:458px">Show »Planning« menu</div>
<div class="l" style="top:478px">Show »Allocate Task To-dos« menu</div>
<div class="l" style="top:497px">Show "Client Management" menu</div>
<div class="cb k" style="top:258px"></div><div class="cb k" style="top:278px"></div><div class="cb k" style="top:306px"></div><div class="cb k" style="top:326px"></div><div class="cb k" style="top:355px"></div><div class="cb k" style="top:374px"></div><div class="cb" style="top:394px"></div><div class="cb k" style="top:423px"></div><div class="cb k" style="top:442px"></div><div class="cb" style="top:462px"></div><div class="cb k" style="top:481px"></div><div class="cb k" style="top:501px"></div>
<svg style="left:948px;top:466px" width="10" height="15"><path d="M1 1v11l2.500-2.500 2 4.500 2-1-2-4.300H9z" fill="#fff" stroke="#333"/></svg>
<div style="left:969px;top:150px;width:8px;height:366px;background:#f5f5f5"></div>
<div style="left:969px;top:357px;width:9px;height:113px;background:#bdbdbd"></div>
<svg style="left:970px;top:154px" width="7" height="5"><path d="M3.500 1L6 4H1z" fill="#444"/></svg>
<svg style="left:970px;top:508px" width="7" height="5"><path d="M3.500 4L6 1H1z" fill="#444"/></svg>
<div style="left:739px;top:520px;width:139px;height:27px;background:#5a9e32;border-radius:2px;color:#fff;font-size:8.5px;line-height:27px;text-align:center">Save</div>
<div style="left:882px;top:520px;width:93px;height:27px;background:#e6e6e6;border-radius:2px;color:#888;font-size:9px;line-height:27px;text-align:center">Close</div>
<div style="left:0;top:550px;width:980px;height:1px;background:#bbb"></div>
<div style="left:979px;top:0;width:1px;height:551px;background:#ccc"></div>
</body></html>
